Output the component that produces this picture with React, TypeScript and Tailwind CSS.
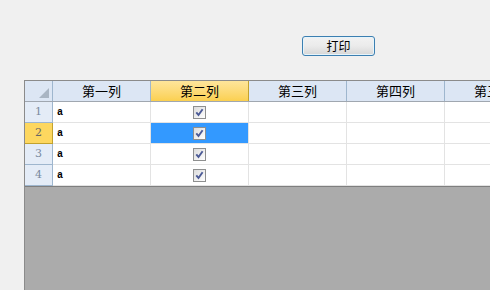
import React from "react";

const font = { fontFamily: '"Noto Sans CJK SC", "Noto Sans", sans-serif' };

function Check() {
  return (
    <div className="w-[13px] h-[13px] border border-[#8e8f8f] bg-gradient-to-br from-[#dcdcdc] to-[#ffffff] flex items-center justify-center">
      <svg width="9" height="9" viewBox="0 0 9 9">
        <path d="M1.3 4.3 L3.5 7 L7.6 1.2" stroke="#4b5a96" strokeWidth="1.9" fill="none" />
      </svg>
    </div>
  );
}

const cols = ["第一列", "第二列", "第三列", "第四列", "第五列"];

export default function App() {
  return (
    <div className="w-[490px] h-[290px] bg-[#f0f0f0] overflow-hidden flex flex-col" style={font}>
      <div className="pt-[36px] pl-[302px]">
        <button className="w-[73px] h-[20px] rounded-[3px] border border-[#3c7fb1] bg-gradient-to-b from-[#f2f2f2] via-[#ebebeb] to-[#d6d6d6] text-[12px] leading-none text-black flex items-center justify-center shadow-[inset_0_0_0_1px_#e6f4fb]">
          打印
        </button>
      </div>
      <div className="mt-[24px] ml-[24px] flex-1 flex flex-col border-l border-t border-[#8b8b8b] bg-[#ababab]">
        <div className="flex h-[21px] border-b border-[#a0a7b0]">
          <div className="w-[28px] shrink-0 bg-[#dce6f4] border-r border-[#9eb6ce] flex items-end justify-end p-[3px]">
            <svg width="10" height="10" viewBox="0 0 10 10"><path d="M10 0 L10 10 L0 10 Z" fill="#a9b5c3" /></svg>
          </div>
          {cols.map((c, i) => (
            <div
              key={c}
              className={
                "w-[98px] shrink-0 border-r flex items-center justify-center text-[13px] text-black whitespace-nowrap overflow-hidden " +
                (i === 1
                  ? "bg-gradient-to-b from-[#fee59a] to-[#fbd04f] border-[#c2a22e]"
                  : "bg-[#dce6f4] border-[#9eb6ce]")
              }
            >
              {c}
            </div>
          ))}
        </div>
        {[1, 2, 3, 4].map((r) => (
          <div key={r} className="flex h-[21px]">
            <div
              className={
                "w-[28px] shrink-0 border-r border-b flex items-center justify-center text-[11px] " +
                (r === 2
                  ? "bg-[#fdd75f] border-[#c2a22e] text-[#666]"
                  : "bg-[#e4ecf7] border-[#9eb6ce] text-[#7a8aa0]")
              }
              style={{ fontFamily: '"DejaVu Serif", serif' }}
            >
              {r}
            </div>
            <div className="w-[98px] shrink-0 bg-white border-r border-b border-[#e3e3e3] flex items-center pl-[4px] text-[10px] font-bold text-black" style={{ fontFamily: '"Liberation Mono", monospace' }}>
              a
            </div>
            <div className={"w-[98px] shrink-0 border-r border-b border-[#e3e3e3] flex items-center justify-center " + (r === 2 ? "bg-[#3399ff]" : "bg-white")}>
              <Check />
            </div>
            <div className="w-[98px] shrink-0 bg-white border-r border-b border-[#e3e3e3]" />
            <div className="w-[98px] shrink-0 bg-white border-r border-b border-[#e3e3e3]" />
            <div className="w-[98px] shrink-0 bg-white border-r border-b border-[#e3e3e3]" />
          </div>
        ))}
        <div className="h-[1px] bg-[#7f7f7f]" />
      </div>
    </div>
  );
}
